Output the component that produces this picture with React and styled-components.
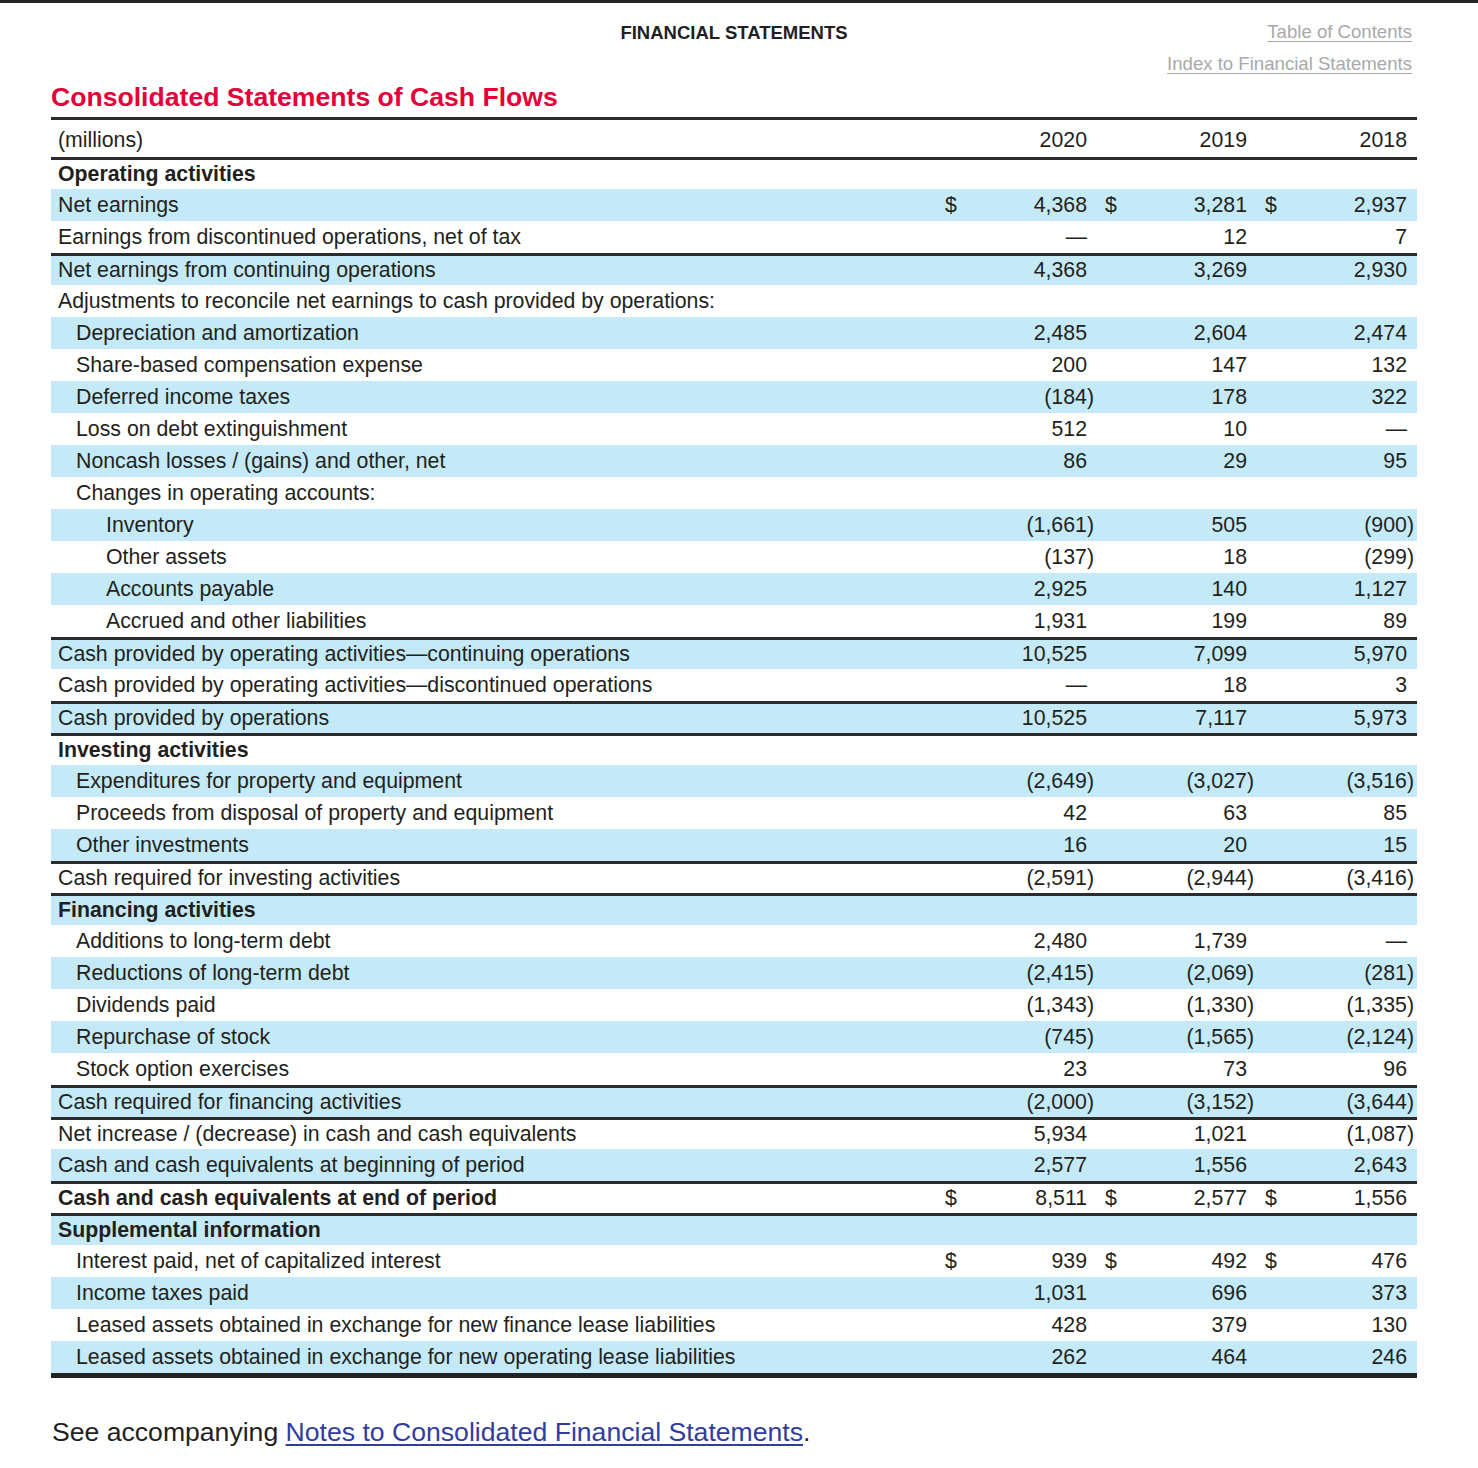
import React from "react";
import styled, { createGlobalStyle } from "styled-components";

const GlobalStyle = createGlobalStyle`
  body {
    margin: 0;
    padding: 0;
    background: #ffffff;
    font-family: "Liberation Sans", Arial, sans-serif;
    color: #231f20;
    border-top: 3px solid #222222;
  }
`;

const Page = styled.div`
  width: 1366px;
  margin: 0 0 0 51px;
  padding-top: 18px;
`;

const TopBar = styled.div`
  display: grid;
  grid-template-columns: 1fr auto 1fr;
  align-items: start;
`;

const Section = styled.div`
  grid-column: 2;
  margin-top: 1px;
  font-size: 18.5px;
  font-weight: 700;
  line-height: 22px;
`;

const Links = styled.div`
  grid-column: 3;
  display: flex;
  flex-direction: column;
  align-items: flex-end;
  gap: 10px;
  padding-right: 5px;
`;

const NavLink = styled.a`
  font-size: 18.6px;
  line-height: 22px;
  color: #a9a9a9;
  text-decoration: underline;
  text-underline-offset: 3px;
`;

const Title = styled.h1`
  margin: 6px 0 4px;
  font-size: 26.6px;
  line-height: 32px;
  font-weight: 700;
  color: #e5003a;
`;

const Table = styled.div`
  border-top: 3px solid #2b2b2b;
  border-bottom: 5px solid #222222;
`;

const Row = styled.div`
  display: grid;
  grid-template-columns: 1fr 160px 160px 160px;
  height: ${(p) => (p.$head ? 37 : 32)}px;
  padding-top: ${(p) => (p.$head ? 4 : 0)}px;
  box-sizing: border-box;
  align-items: center;
  font-size: 21.3px;
  font-weight: ${(p) => (p.$bold ? 700 : 400)};
  background: ${(p) => (p.$shade ? "#c4eaf8" : "#ffffff")};
  border-top: ${(p) => (p.$rule ? "3px solid #2b2b2b" : "none")};
`;

const Label = styled.div`
  padding-left: ${(p) => 7 + p.$indent}px;
  white-space: nowrap;
`;

const Cell = styled.div`
  display: flex;
  justify-content: space-between;
  padding: 0 10px 0 8px;
  font-weight: 400;
`;

const Dollar = styled.span`
  width: 12px;
`;

const Amount = styled.span`
  text-align: right;
  white-space: nowrap;
`;

const Paren = styled.span`
  margin-right: -7px;
`;

const Footer = styled.p`
  margin: 38px 0 0 1px;
  font-size: 26.6px;
  line-height: 32px;
`;

const NoteLink = styled.a`
  color: #323ca0;
  text-decoration: underline;
  text-underline-offset: 3px;
`;

// [label, indent, values, flags]
const rows = [
  ["Operating activities", 0, null, { bold: true, rule: true }],
  ["Net earnings", 0, ["4,368", "3,281", "2,937"], { dollar: true }],
  ["Earnings from discontinued operations, net of tax", 0, ["—", "12", "7"]],
  ["Net earnings from continuing operations", 0, ["4,368", "3,269", "2,930"], { rule: true }],
  ["Adjustments to reconcile net earnings to cash provided by operations:", 0, null],
  ["Depreciation and amortization", 18, ["2,485", "2,604", "2,474"]],
  ["Share-based compensation expense", 18, ["200", "147", "132"]],
  ["Deferred income taxes", 18, ["(184)", "178", "322"]],
  ["Loss on debt extinguishment", 18, ["512", "10", "—"]],
  ["Noncash losses / (gains) and other, net", 18, ["86", "29", "95"]],
  ["Changes in operating accounts:", 18, null],
  ["Inventory", 48, ["(1,661)", "505", "(900)"]],
  ["Other assets", 48, ["(137)", "18", "(299)"]],
  ["Accounts payable", 48, ["2,925", "140", "1,127"]],
  ["Accrued and other liabilities", 48, ["1,931", "199", "89"]],
  ["Cash provided by operating activities—continuing operations", 0, ["10,525", "7,099", "5,970"], { rule: true }],
  ["Cash provided by operating activities—discontinued operations", 0, ["—", "18", "3"]],
  ["Cash provided by operations", 0, ["10,525", "7,117", "5,973"], { rule: true }],
  ["Investing activities", 0, null, { bold: true, rule: true }],
  ["Expenditures for property and equipment", 18, ["(2,649)", "(3,027)", "(3,516)"]],
  ["Proceeds from disposal of property and equipment", 18, ["42", "63", "85"]],
  ["Other investments", 18, ["16", "20", "15"]],
  ["Cash required for investing activities", 0, ["(2,591)", "(2,944)", "(3,416)"], { rule: true }],
  ["Financing activities", 0, null, { bold: true, rule: true }],
  ["Additions to long-term debt", 18, ["2,480", "1,739", "—"]],
  ["Reductions of long-term debt", 18, ["(2,415)", "(2,069)", "(281)"]],
  ["Dividends paid", 18, ["(1,343)", "(1,330)", "(1,335)"]],
  ["Repurchase of stock", 18, ["(745)", "(1,565)", "(2,124)"]],
  ["Stock option exercises", 18, ["23", "73", "96"]],
  ["Cash required for financing activities", 0, ["(2,000)", "(3,152)", "(3,644)"], { rule: true }],
  ["Net increase / (decrease) in cash and cash equivalents", 0, ["5,934", "1,021", "(1,087)"], { rule: true }],
  ["Cash and cash equivalents at beginning of period", 0, ["2,577", "1,556", "2,643"]],
  ["Cash and cash equivalents at end of period", 0, ["8,511", "2,577", "1,556"], { rule: true, bold: true, dollar: true }],
  ["Supplemental information", 0, null, { bold: true, rule: true }],
  ["Interest paid, net of capitalized interest", 18, ["939", "492", "476"], { dollar: true }],
  ["Income taxes paid", 18, ["1,031", "696", "373"]],
  ["Leased assets obtained in exchange for new finance lease liabilities", 18, ["428", "379", "130"]],
  ["Leased assets obtained in exchange for new operating lease liabilities", 18, ["262", "464", "246"]],
];

function Value({ text }) {
  if (text.endsWith(")")) {
    return (
      <Amount>
        {text.slice(0, -1)}
        <Paren>)</Paren>
      </Amount>
    );
  }
  return <Amount>{text}</Amount>;
}

export default function App() {
  return (
    <>
      <GlobalStyle />
      <Page>
        <TopBar>
          <Section>FINANCIAL STATEMENTS</Section>
          <Links>
            <NavLink>Table of Contents</NavLink>
            <NavLink>Index to Financial Statements</NavLink>
          </Links>
        </TopBar>
        <Title>Consolidated Statements of Cash Flows</Title>
        <Table>
          <Row $head>
            <Label $indent={0}>(millions)</Label>
            {["2020", "2019", "2018"].map((y) => (
              <Cell key={y}>
                <Dollar />
                <Amount>{y}</Amount>
              </Cell>
            ))}
          </Row>
          {rows.map(([label, indent, values, flags = {}], i) => (
            <Row key={label} $shade={i % 2 === 1} $rule={flags.rule} $bold={flags.bold}>
              <Label $indent={indent}>{label}</Label>
              {values &&
                values.map((v, j) => (
                  <Cell key={j}>
                    <Dollar>{flags.dollar ? "$" : ""}</Dollar>
                    <Value text={v} />
                  </Cell>
                ))}
            </Row>
          ))}
        </Table>
        <Footer>
          See accompanying{" "}
          <NoteLink>Notes to Consolidated Financial Statements</NoteLink>.
        </Footer>
      </Page>
    </>
  );
}
